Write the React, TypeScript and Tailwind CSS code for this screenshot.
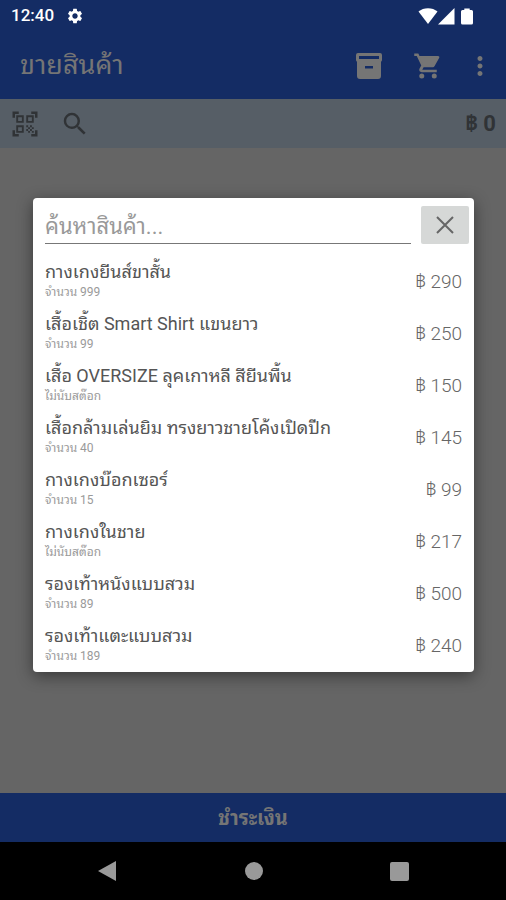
import { MdMoreVert, MdOutlineQrCodeScanner, MdSearch, MdSettings } from "react-icons/md";

type Product = { name: string; stock: string; price: number };

const PRODUCTS: Product[] = [
  { name: "กางเกงยีนส์ขาสั้น", stock: "จำนวน 999", price: 290 },
  { name: "เสื้อเชิ้ต Smart Shirt แขนยาว", stock: "จำนวน 99", price: 250 },
  { name: "เสื้อ OVERSIZE ลุคเกาหลี สียีนพื้น", stock: "ไม่นับสต๊อก", price: 150 },
  { name: "เสื้อกล้ามเล่นยิม ทรงยาวชายโค้งเปิดปีก", stock: "จำนวน 40", price: 145 },
  { name: "กางเกงบ๊อกเซอร์", stock: "จำนวน 15", price: 99 },
  { name: "กางเกงในชาย", stock: "ไม่นับสต๊อก", price: 217 },
  { name: "รองเท้าหนังแบบสวม", stock: "จำนวน 89", price: 500 },
  { name: "รองเท้าแตะแบบสวม", stock: "จำนวน 189", price: 240 },
];

function StatusBar() {
  return (
    <div className="flex h-8 items-center pr-8 pl-[11px] text-white">
      <span className="text-[17px] font-medium">12:40</span>
      <MdSettings className="ml-3 size-[18px]" />
      <svg viewBox="0 0 56 18" className="ml-auto h-[18px] w-14" fill="currentColor" aria-hidden="true">
        <path d="M.5 4.6C5.500 .1 14.500 .1 19.500 4.600L10 17z" />
        <path d="M20 17.500 36.500 1v16.500z" />
        <path d="M44.500 3h1.800V1.500h5.400V3h1.800a1.500 1.500 0 0 1 1.500 1.500v11.500a1.500 1.500 0 0 1-1.500 1.500h-9a1.500 1.500 0 0 1-1.500-1.500V4.500a1.500 1.500 0 0 1 1.500-1.500z" />
      </svg>
    </div>
  );
}

function BoxIcon() {
  return (
    <svg viewBox="0 0 26 26" className="size-[26px]" fill="currentColor" fillRule="evenodd" aria-hidden="true">
      <path d="M2 0h22a2 2 0 0 1 2 2v5a2 2 0 0 1-1 1.700V23a3 3 0 0 1-3 3H4a3 3 0 0 1-3-3V8.700A2 2 0 0 1 0 7V2a2 2 0 0 1 2-2zM3 3v3h20V3zM9 13v2.500h8V13z" />
    </svg>
  );
}

function CartIcon() {
  return (
    <svg viewBox="0 0 24 24" className="size-[30px]" fill="currentColor" aria-hidden="true">
      <path d="M1 2v2h2l3.600 7.600-1.350 2.450C4.500 15.400 5.500 17 7 17h12v-2H7.400l1.100-2h7.050c.75 0 1.410-.41 1.750-1.030L21 5.300C21.300 4.700 20.800 4 20 4H5.200l-.93-2z" />
      <path d="M5.500 5h15l-4 7.500h-8z" />
      <circle cx="7" cy="20" r="2" />
      <circle cx="17" cy="20" r="2" />
    </svg>
  );
}

function ProductRow({ name, stock, price }: Product) {
  return (
    <li className="flex h-[52px] items-center justify-between px-3">
      <div>
        <p className="text-lg leading-5 text-[#555]">{name}</p>
        <p className="text-xs leading-5 text-[#9a9a9a]">{stock}</p>
      </div>
      <span className="text-[19px] font-light text-[#666]">฿ {price}</span>
    </li>
  );
}

function SearchDialog() {
  return (
    <div className="absolute inset-0 flex items-center justify-center pt-7 pr-8 pb-[58px] pl-[33px]">
      <div role="dialog" aria-label="ค้นหาสินค้า" className="w-full rounded-sm bg-white shadow-[0_4px_16px_rgba(0,0,0,0.45)]">
        <div className="flex h-[58px] items-center gap-[10px] pr-[5px] pl-3 pt-2 pb-3">
          <input
            type="text"
            aria-label="ค้นหาสินค้า"
            placeholder="ค้นหาสินค้า..."
            className="h-[38px] min-w-0 flex-1 border-b border-[#777] pt-1 text-[22px] outline-none placeholder:text-[#999]"
          />
          <button type="button" aria-label="ปิด" className="flex h-[38px] w-12 items-center justify-center rounded-xs bg-[#d6d8d7] text-[#666]">
            <svg viewBox="0 0 18 18" className="size-[18px]" fill="none" stroke="currentColor" strokeWidth="2" aria-hidden="true">
              <path d="M1 1l16 16M17 1 1 17" />
            </svg>
          </button>
        </div>
        <ul>
          {PRODUCTS.map((p) => (
            <ProductRow key={p.name} {...p} />
          ))}
        </ul>
      </div>
    </div>
  );
}

export default function App() {
  return (
    <div className="relative flex min-h-screen flex-col bg-[#656565] font-[Roboto,'Noto_Sans_Thai_Looped',Loma,Waree,Umpush,Garuda,'Droid_Sans_Thai',sans-serif]">
      <header className="bg-[#142c64]">
        <StatusBar />
        <div className="flex h-[67px] items-center pr-[11px] pl-5 text-[#757575]">
          <h1 className="text-[27px]">ขายสินค้า</h1>
          <button type="button" aria-label="สินค้า" className="ml-auto">
            <BoxIcon />
          </button>
          <button type="button" aria-label="ตะกร้า" className="ml-[31px]">
            <CartIcon />
          </button>
          <button type="button" aria-label="เมนู" className="ml-[22px]">
            <MdMoreVert className="size-[30px]" />
          </button>
        </div>
      </header>
      <div className="flex h-[49px] items-center bg-[#565e66] px-[10px] text-[#303336]">
        <button type="button" aria-label="สแกน">
          <MdOutlineQrCodeScanner className="size-[30px]" />
        </button>
        <button type="button" aria-label="ค้นหา" className="ml-5">
          <MdSearch className="size-[30px]" />
        </button>
        <span className="ml-auto text-[22px] font-bold">฿ 0</span>
      </div>
      <main className="flex-1" />
      <button type="button" className="h-[49px] bg-[#142c64] text-xl font-bold text-[#757575]">
        ชำระเงิน
      </button>
      <nav className="flex h-[58px] items-center justify-around bg-black px-[34px] text-[#999]">
        <button type="button" aria-label="ย้อนกลับ">
          <svg viewBox="0 0 20 20" className="size-5" fill="currentColor" aria-hidden="true">
            <path d="M0 10 18 0v20z" />
          </svg>
        </button>
        <button type="button" aria-label="หน้าหลัก" className="size-[18px] rounded-full bg-[#999]" />
        <button type="button" aria-label="แอปล่าสุด" className="size-[19px] rounded-xs bg-[#999]" />
      </nav>
      <SearchDialog />
    </div>
  );
}
